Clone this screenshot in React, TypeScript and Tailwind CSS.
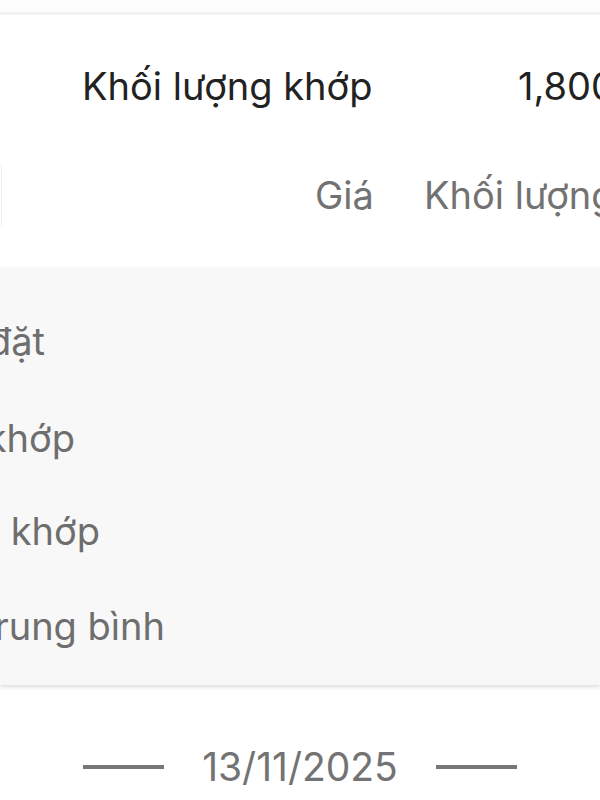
import React from "react";

export default function App() {
  const font = { fontFamily: "Inter, 'Noto Sans', sans-serif" };
  return (
    <div
      className="w-[600px] h-[800px] bg-white overflow-hidden flex flex-col"
      style={font}
    >
      <div className="h-[12px] bg-[#fdfdfd] shrink-0" />
      <div className="h-[3px] bg-[#f3f3f3] shrink-0" />

      {/* Row 1 */}
      <div className="mt-[52px] h-[38px] flex items-center text-[38px] leading-none text-[#222] whitespace-nowrap shrink-0">
        <span className="w-[518px] pl-[82px] shrink-0">Khối lượng khớp</span>
        <span className="shrink-0">1,800</span>
      </div>

      {/* Row 2 */}
      <div className="mt-[71px] h-[38px] flex items-center text-[38px] leading-none text-[#727272] whitespace-nowrap shrink-0">
        <div className="w-[315px] h-[38px] shrink-0 flex items-center">
          <div className="w-[2px] h-[62px] shrink-0 border-r border-[#efefef] rounded-r-md" />
        </div>
        <span className="w-[109px] shrink-0">Giá</span>
        <span className="shrink-0">Khối lượng khớp</span>
      </div>

      {/* Panel */}
      <div className="mt-[54px] h-[417px] bg-[#f8f8f8] shadow-[0_2px_4px_rgba(0,0,0,0.14)] shrink-0 flex flex-col pt-[50px] text-[38px] leading-[46px] text-[#6e6e6e] whitespace-nowrap">
        <div className="w-[45px] overflow-hidden flex justify-end">
          <span className="shrink-0">Khối lượng đặt</span>
        </div>
        <div className="mt-[51px] w-[75px] overflow-hidden flex justify-end">
          <span className="shrink-0">Khối lượng khớp</span>
        </div>
        <div className="mt-[47px] w-[100px] overflow-hidden flex justify-end">
          <span className="shrink-0">Thời gian khớp</span>
        </div>
        <div className="mt-[49px] w-[165px] overflow-hidden flex justify-end">
          <span className="shrink-0">Giá trung bình</span>
        </div>
      </div>

      {/* Date */}
      <div className="mt-[62px] h-[39px] flex items-center justify-center gap-[38px] text-[39px] leading-none text-[#737373] shrink-0">
        <div className="w-[81px] h-[4px] bg-[#777]" />
        <span>13/11/2025</span>
        <div className="w-[81px] h-[4px] bg-[#777]" />
      </div>
    </div>
  );
}
